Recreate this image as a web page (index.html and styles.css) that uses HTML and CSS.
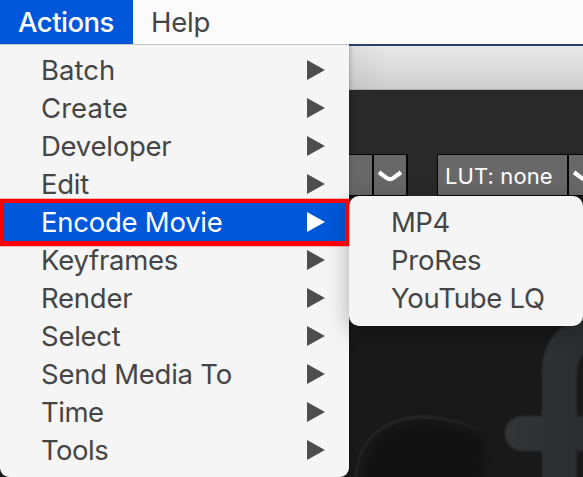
FILE: index.html
```html
<!DOCTYPE html>
<html lang="en">
<head>
<meta charset="utf-8">
<title>Actions</title>
<link rel="stylesheet" href="styles.css">
</head>
<body>
<nav class="menubar"><span class="tab active">Actions</span><span class="tab help">Help</span></nav>
<main class="desktop">
  <div class="titlebar"></div>
  <div class="toolbar">
    <div class="select first"><span class="value"></span><span class="drop"><svg width="24" height="14" viewBox="0 0 24 14"><path d="M1 2.300L8.500 7.900Q12 10.500 15.500 7.900L23 2.300"/></svg></span></div>
    <div class="select lut"><span class="value">LUT: none</span><span class="drop"><svg width="24" height="14" viewBox="0 0 24 14"><path d="M1 2.300L8.500 7.900Q12 10.500 15.500 7.900L23 2.300"/></svg></span></div>
  </div>
  <svg class="artwork" width="234" height="281" viewBox="349 196 234 281">
    <defs>
      <filter id="soft" color-interpolation-filters="sRGB"><feGaussianBlur stdDeviation="1"/></filter>
      <filter id="shade" color-interpolation-filters="sRGB" x="-20%" y="-20%" width="140%" height="140%"><feGaussianBlur stdDeviation="4"/></filter>
      <linearGradient id="rim" x1="0" x2="1"><stop offset="0" stop-color="#252525"/><stop offset=".55" stop-color="#2d2d2d"/><stop offset="1" stop-color="#1c1c1c"/></linearGradient>
      <linearGradient id="letter" x1="0" x2="1"><stop offset="0" stop-color="#343537"/><stop offset="1" stop-color="#2b2c2e"/></linearGradient>
    </defs>
    <path d="M361 500C361 445 385 424 423 423Q447 423 477 434Q486 437 484 455L481 500Z" fill="#121212" filter="url(#shade)"/>
    <path d="M356 480C356 440 385 417 423 417Q447 417 482 430" fill="none" stroke="url(#rim)" stroke-width="2.500" filter="url(#soft)"/>
    <path d="M542 490V451H523C499 451 499 416 523 416H542V374C542 343 557 322 589 315V350C580 354 577 363 577 374V416H590V451H577V490Z" fill="url(#letter)" filter="url(#soft)"/>
  </svg>
</main>
<div class="menu main-menu">
  <div class="item"><span class="roomy">Batch</span><i></i></div>
  <div class="item"><span class="roomy">Create</span><i></i></div>
  <div class="item"><span>Developer</span><i></i></div>
  <div class="item"><span>Edit</span><i></i></div>
  <div class="item selected"><span>Encode Movie</span><i></i></div>
  <div class="item"><span>Keyframes</span><i></i></div>
  <div class="item"><span>Render</span><i></i></div>
  <div class="item"><span>Select</span><i></i></div>
  <div class="item"><span>Send Media To</span><i></i></div>
  <div class="item"><span class="tight">Time</span><i></i></div>
  <div class="item"><span class="tight">Tools</span><i></i></div>
</div>
<div class="highlight"></div>
<div class="menu submenu">
  <div class="item"><span class="tight">MP4</span></div>
  <div class="item"><span>ProRes</span></div>
  <div class="item"><span>YouTube LQ</span></div>
</div>
</body>
</html>
```
FILE: styles.css
```css
* { box-sizing: border-box; }
body { margin: 0; width: 583px; height: 477px; overflow: hidden; position: relative; background: #191919; font: 27.5px/38px Inter, "Liberation Sans", sans-serif; color: #454545; letter-spacing: -.25px; }
.menubar { display: flex; position: relative; z-index: 1; height: 44px; background: #fbfbfb; line-height: 45px; }
.tab { padding-left: 18px; white-space: nowrap; }
.tab.active { width: 133px; background: #0057d9; color: #fff; font-weight: 500; letter-spacing: -.5px; }
.desktop { height: 433px; padding-left: 349px; border-top: 2px solid #24436e; }
.titlebar { height: 44px; background: linear-gradient(90deg, rgba(0,0,0,.05), transparent 38px), linear-gradient(#e8e8e8, #cecece); border-bottom: 1px solid #aaa; }
.toolbar { display: flex; height: 106px; padding-top: 64px; gap: 29px; background: #292929; }
.select { display: flex; height: 42px; border: 1px solid #050505; background: #686868; flex: none; }
.select.first { width: 59px; border-left: 0; border-right-width: 2px; }
.select.lut { width: 166px; }
.select .value { width: 131px; padding-left: 7px; border-right: 2px solid #050505; color: #fff; font-size: 22px; line-height: 43px; letter-spacing: .1px; white-space: nowrap; flex: none; }
.select.first .value { width: 25px; padding: 0; }
.drop { display: flex; width: 32px; flex: none; justify-content: center; align-items: center; padding-top: 4px; }
.drop svg { flex: none; fill: none; stroke: #fff; stroke-width: 4.2; }
.artwork { display: block; background: #191919; }
.menu { position: absolute; background: #f5f5f5; }
.main-menu { left: 0; top: 44px; width: 349px; height: 433px; padding-top: 6px; border-top: 1px solid #c5c5c5; border-radius: 0 0 9px 9px; box-shadow: 0 0 5px rgba(0,0,0,.35); }
.item { display: flex; justify-content: space-between; align-items: center; height: 38px; padding: 0 24px 0 41px; white-space: nowrap; }
.item .roomy { letter-spacing: .05px; }
.item .tight { letter-spacing: -.5px; }
.item i { width: 18px; height: 20px; background: #4d4d4d; clip-path: polygon(0 0, 100% 50%, 0 100%); }
.item.selected { background: #0057d9; color: #fff; }
.item.selected i { background: #fff; }
.submenu { left: 349px; top: 196px; width: 234px; height: 130px; padding-top: 7px; border-radius: 10px; box-shadow: 0 5px 22px rgba(0,0,0,.3); }
.submenu .item { padding-left: 42px; }
.highlight { position: absolute; z-index: 2; left: 0; top: 199px; width: 349px; height: 47px; border: 4px solid #f00; border-bottom-width: 5px; box-shadow: 0 0 0 .5px rgba(255,0,0,.5); }
```
